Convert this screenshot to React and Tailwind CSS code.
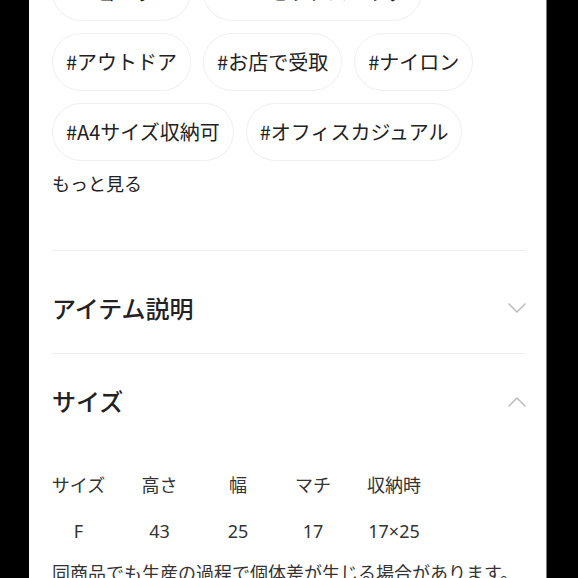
import React from 'react';

const font = { fontFamily: '"Noto Sans CJK JP", "Noto Sans", sans-serif' };
const latinFirst = { fontFamily: '"Noto Sans", "Noto Sans CJK JP", sans-serif' };

const tags = [
  '#ショルダー',
  '#ユニセックスバッグ',
  '#アウトドア',
  '#お店で受取',
  '#ナイロン',
  '#A4サイズ収納可',
  '#オフィスカジュアル',
];

const Chevron = ({ up }) => (
  <svg width="18" height="11" viewBox="0 0 18 11" fill="none">
    <polyline
      points={up ? '1,10 9,2 17,10' : '1,1 9,9 17,1'}
      stroke="#bdbdbd"
      strokeWidth="1.6"
      strokeLinecap="round"
      strokeLinejoin="round"
    />
  </svg>
);

const cols = [
  { head: 'サイズ', value: 'F' },
  { head: '高さ', value: '43' },
  { head: '幅', value: '25' },
  { head: 'マチ', value: '17' },
  { head: '収納時', value: '17×25' },
];

export default function App() {
  return (
    <div className="h-[578px] w-[578px] overflow-hidden bg-black" style={font}>
      <div className="ml-[29px] h-full w-[518px] overflow-hidden border-r border-[#777] bg-white pl-[23px] pr-[20px] text-[#222]">
        <div className="mt-[-37px] flex flex-wrap gap-x-[12px] gap-y-[12px]">
          {tags.map((t) => (
            <div
              key={t}
              className="flex h-[58px] items-center whitespace-nowrap rounded-full border border-[#efefef] px-[13px] text-[20px]"
            >
              {t}
            </div>
          ))}
        </div>

        <div className="mt-[10px] text-[18px] leading-[24px]">もっと見る</div>

        <div className="mt-[55px] h-px bg-[#eeeeee]" />

        <div className="flex items-center justify-between pt-[41px] pb-[29px]">
          <h2 className="text-[24px] font-medium leading-[32px]">アイテム説明</h2>
          <Chevron />
        </div>

        <div className="h-px bg-[#eeeeee]" />

        <div className="flex items-center justify-between pt-[31px]">
          <h2 className="text-[24px] font-medium leading-[32px]">サイズ</h2>
          <Chevron up />
        </div>

        <div className="mt-[55px] grid grid-cols-[53px_109px_48px_102px_60px] whitespace-nowrap text-center text-[18px] leading-[24px] text-[#333]">
          {cols.map((c) => (
            <div key={c.head} className="flex justify-center">{c.head}</div>
          ))}
        </div>
        <div
          className="mt-[23px] grid grid-cols-[53px_109px_48px_102px_60px] whitespace-nowrap text-center text-[18px] leading-[24px] text-[#333]"
          style={latinFirst}
        >
          {cols.map((c) => (
            <div key={c.head} className="flex justify-center">{c.value}</div>
          ))}
        </div>

        <p className="mt-[17px] whitespace-nowrap text-[18px] leading-[24px] text-[#333]">
          同商品でも生産の過程で個体差が生じる場合があります。
        </p>
      </div>
    </div>
  );
}
